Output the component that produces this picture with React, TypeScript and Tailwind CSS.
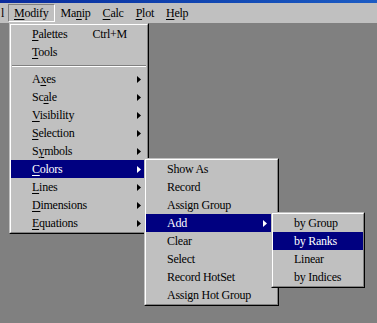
type Item = { label: string; u?: number; arrow?: boolean; shortcut?: string; active?: boolean; sep?: boolean };

const mainItems: Item[] = [
  { label: "Palettes", u: 0, shortcut: "Ctrl+M" },
  { label: "Tools", u: 0 },
  { label: "", sep: true },
  { label: "Axes", u: 1, arrow: true },
  { label: "Scale", u: 2, arrow: true },
  { label: "Visibility", u: 0, arrow: true },
  { label: "Selection", u: 0, arrow: true },
  { label: "Symbols", u: 1, arrow: true },
  { label: "Colors", u: 0, arrow: true, active: true },
  { label: "Lines", u: 0, arrow: true },
  { label: "Dimensions", u: 0, arrow: true },
  { label: "Equations", u: 0, arrow: true },
];

const colorItems: Item[] = [
  { label: "Show As" },
  { label: "Record" },
  { label: "Assign Group" },
  { label: "Add", arrow: true, active: true },
  { label: "Clear" },
  { label: "Select" },
  { label: "Record HotSet" },
  { label: "Assign Hot Group" },
];

const addItems: Item[] = [
  { label: "by Group" },
  { label: "by Ranks", active: true },
  { label: "Linear" },
  { label: "by Indices" },
];

function Label({ text, u }: { text: string; u?: number }) {
  if (u === undefined) return <span>{text}</span>;
  return (
    <span>
      {text.slice(0, u)}
      <span className="underline underline-offset-[2px]">{text[u]}</span>
      {text.slice(u + 1)}
    </span>
  );
}

function Arrow({ white }: { white?: boolean }) {
  return (
    <svg width="4" height="7" viewBox="0 0 4 7" className="shrink-0">
      <polygon points="0,0 4,3.5 0,7" fill={white ? "#fff" : "#000"} />
    </svg>
  );
}

function Menu({ items, className, arrowPad }: { items: Item[]; className: string; arrowPad: string }) {
  return (
    <div className={`absolute border border-t-[#c0c0c0] border-l-[#c0c0c0] border-r-black border-b-black ${className}`}>
      <div className="h-full border border-t-white border-l-white border-r-[#808080] border-b-[#808080] bg-[#c0c0c0]">
        {items.map((it, i) =>
          it.sep ? (
            <div key={i} className="flex h-[9px] items-center px-[1px]">
              <div className="h-[2px] w-full border-t border-t-[#808080] border-b border-b-white" />
            </div>
          ) : (
            <div
              key={i}
              className={`flex h-[18px] items-center pl-[21px] ${arrowPad} ${it.active ? "bg-[#000080] text-white" : "text-black"}`}
            >
              <div className="flex-1 whitespace-nowrap">
                <Label text={it.label} u={it.u} />
              </div>
              {it.shortcut && <span className="mr-[14px]">{it.shortcut}</span>}
              {it.arrow && <Arrow white={it.active} />}
            </div>
          )
        )}
      </div>
    </div>
  );
}

export default function App() {
  return (
    <div
      className="relative h-[323px] w-[377px] overflow-hidden bg-[#808080] text-[12px] leading-[18px] tracking-[-0.25px] text-black"
      style={{ fontFamily: '"Liberation Serif", "Times New Roman", serif' }}
    >
      <div className="h-[3px] bg-gradient-to-r from-[#0a2a9c] to-[#1c5cc4]" />
      <div className="flex h-[20px] items-center bg-[#c0c0c0]">
        <span className="w-[8px] pl-[1px]">l</span>
        <div className="flex h-[18px] items-center border border-t-[#808080] border-l-[#808080] border-r-white border-b-white px-[5px]">
          <Label text="Modify" u={0} />
        </div>
        <div className="px-[6px]"><Label text="Manip" u={2} /></div>
        <div className="px-[6px]"><Label text="Calc" u={0} /></div>
        <div className="px-[6px]"><Label text="Plot" u={0} /></div>
        <div className="px-[6px]"><Label text="Help" u={0} /></div>
      </div>

      <Menu items={mainItems} className="left-[9px] top-[23px] h-[211px] w-[140px]" arrowPad="pr-[6px]" />
      <Menu items={colorItems} className="left-[144px] top-[158px] h-[148px] w-[135px]" arrowPad="pr-[10px]" />
      <Menu items={addItems} className="left-[271px] top-[212px] h-[76px] w-[94px]" arrowPad="pr-[6px]" />
    </div>
  );
}
